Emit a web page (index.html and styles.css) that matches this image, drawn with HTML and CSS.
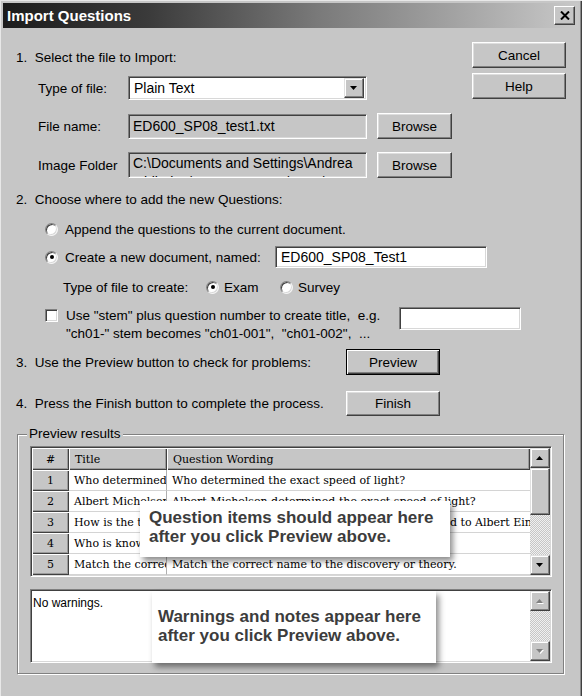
FILE: index.html
```html
<!DOCTYPE html>
<html>
<head>
<meta charset="utf-8">
<link rel="stylesheet" href="styles.css">
</head>
<body>
<div class="window">
  <div class="titlebar">
    <span class="title">Import Questions</span>
    <span class="close"><svg width="10" height="9" viewBox="0 0 10 9"><path d="M1 0.5L9 8.5M9 0.5L1 8.5" stroke="#000" stroke-width="2"/></svg></span>
  </div>
  <div class="body">
    <div class="top">
      <div class="step1">
        <div class="h h1">1.&nbsp; Select the file to Import:</div>
        <div class="row r-type">
          <span class="lbl">Type of file:</span>
          <div class="combo"><span class="combo-text">Plain Text</span><span class="dd"><svg width="8" height="4" viewBox="0 0 8 4"><path d="M0 0H7L3.5 4Z" fill="#000"/></svg></span></div>
        </div>
        <div class="row r-file">
          <span class="lbl">File name:</span>
          <div class="field ro">ED600_SP08_test1.txt</div>
          <button class="btn browse">Browse</button>
        </div>
        <div class="row r-img">
          <span class="lbl">Image Folder</span>
          <div class="field ro multi">C:\Documents and Settings\Andrea<br>Ohlhaber\My Documents\2008\Research</div>
          <button class="btn browse">Browse</button>
        </div>
      </div>
      <div class="side">
        <button class="btn side-btn">Cancel</button>
        <button class="btn side-btn">Help</button>
      </div>
    </div>

    <div class="h h2">2.&nbsp; Choose where to add the new Questions:</div>
    <div class="row opt-append">
      <span class="radio"></span><span class="rtext">Append the questions to the current document.</span>
    </div>
    <div class="row opt-create">
      <span class="rlabel"><span class="radio on"></span><span class="rtext">Create a new document, named:</span></span>
      <div class="field white name-field">ED600_SP08_Test1</div>
    </div>
    <div class="row type-row">
      <span class="tlabel">Type of file to create:</span>
      <span class="opt"><span class="radio on"></span><span class="otext">Exam</span></span>
      <span class="opt"><span class="radio"></span><span class="otext">Survey</span></span>
    </div>
    <div class="stem-row">
      <span class="check"></span>
      <span class="stem-text">Use "stem" plus question number to create title,&nbsp; e.g.<br>"ch01-" stem becomes "ch01-001",&nbsp; "ch01-002",&nbsp; ...</span>
      <div class="field white stem-field"></div>
    </div>
    <div class="row step3">
      <span class="slabel">3.&nbsp; Use the Preview button to check for problems:</span>
      <button class="btn default act">Preview</button>
    </div>
    <div class="row step4">
      <span class="slabel">4.&nbsp; Press the Finish button to complete the process.</span>
      <button class="btn act finish">Finish</button>
    </div>

    <div class="group">
      <span class="group-label">Preview results</span>
      <div class="grid-wrap">
        <div class="grid">
          <div class="hc num">#</div><div class="hc">Title</div><div class="hc">Question Wording</div>
          <div class="rc">1</div><div class="dc t">Who determined the exact speed of light</div><div class="dc">Who determined the exact speed of light?</div>
          <div class="rc">2</div><div class="dc t">Albert Michelson</div><div class="dc">Albert Michelson determined the exact speed of light?</div>
          <div class="rc">3</div><div class="dc t">How is the theory of relativity</div><div class="dc">How is the theory of relativity also often attributed to Albert Einstein?</div>
          <div class="rc">4</div><div class="dc t">Who is known as the father</div><div class="dc">Who is known as the father of physics?</div>
          <div class="rc">5</div><div class="dc t">Match the correct name</div><div class="dc">Match the correct name to the discovery or theory.</div>
        </div>
        <div class="vscroll">
          <span class="sbtn"><svg width="8" height="4" viewBox="0 0 8 4"><path d="M0 4H7L3.5 0Z" fill="#000"/></svg></span>
          <span class="thumb"></span>
          <span class="track"></span>
          <span class="sbtn"><svg width="8" height="4" viewBox="0 0 8 4"><path d="M0 0H7L3.5 4Z" fill="#000"/></svg></span>
        </div>
      </div>
      <div class="warn-wrap">
        <div class="warn-text">No warnings.</div>
        <div class="vscroll">
          <span class="sbtn dis"><svg width="9" height="5" viewBox="0 0 9 5"><path d="M1 5H8L4.5 1.5Z" fill="#fff"/><path d="M0 4H7L3.5 0Z" fill="#808080"/></svg></span>
          <span class="track"></span>
          <span class="sbtn dis"><svg width="9" height="5" viewBox="0 0 9 5"><path d="M1 1H8L4.5 5Z" fill="#fff"/><path d="M0 0H7L3.5 4Z" fill="#808080"/></svg></span>
        </div>
      </div>
      <div class="callout callout1">Question items should appear here<br>after you click Preview above.</div>
      <div class="callout callout2">Warnings and notes appear here<br>after you click Preview above.</div>
    </div>
  </div>
</div>
</body>
</html>
```
FILE: styles.css
```css
html, body {
  margin: 0;
  padding: 0;
}
body {
  width: 582px;
  height: 696px;
  overflow: hidden;
  background: #c6c6c6;
  font-family: "Liberation Sans", Arial, sans-serif;
  font-size: 13.5px;
  color: #000;
}
.window {
  width: 582px;
  height: 696px;
  box-sizing: border-box;
  padding: 3px 4px 0 3px;
  background: #c6c6c6;
  box-shadow: inset 1px 1px 0 #e8e8e8, inset -1px 0 0 #404040, inset -2px 0 0 #8a8a8a;
}
.titlebar {
  height: 25px;
  display: flex;
  align-items: center;
  justify-content: space-between;
  padding: 0 3px 0 4px;
  background: linear-gradient(to right, #1c1c1c 0%, #3a3a3a 25%, #7a7a7a 55%, #c8c8c8 100%);
}
.title {
  color: #fff;
  font-weight: bold;
  font-size: 15px;
}
.close {
  width: 21px;
  height: 19px;
  box-sizing: border-box;
  background: #c6c6c6;
  border: 1px solid;
  border-color: #fff #404040 #404040 #fff;
  box-shadow: inset -1px -1px 0 #808080;
  display: flex;
  align-items: center;
  justify-content: center;
}
.body {
  padding: 0 12px 0 13px;
}
.top {
  display: flex;
  justify-content: space-between;
}
.h {
  height: 16px;
  line-height: 16px;
  white-space: nowrap;
}
.h1 { margin-top: 22px; }
.h2 { margin-top: 14px; }
.row {
  display: flex;
  align-items: center;
  white-space: nowrap;
}
.side {
  display: flex;
  flex-direction: column;
  gap: 5px;
  margin-top: 14px;
}
.btn {
  font-family: "Liberation Sans", Arial, sans-serif;
  font-size: 13.5px;
  color: #000;
  background: #c6c6c6;
  border: 1px solid;
  border-color: #fff #404040 #404040 #fff;
  box-shadow: inset -1px -1px 0 #808080, inset 1px 1px 0 #dedede;
  box-sizing: border-box;
  padding: 0;
  margin: 0;
}
.side-btn {
  width: 94px;
  height: 26px;
}
.r-type, .r-file, .r-img {
  padding-left: 22px;
}
.r-type { margin-top: 10px; height: 24px; }
.r-file { margin-top: 13px; height: 26px; }
.r-img { margin-top: 13px; height: 26px; }
.lbl { width: 90px; }
.field, .combo, .check, .grid-wrap, .warn-wrap {
  border: 1px solid;
  border-color: #808080 #fff #fff #808080;
  box-shadow: inset 1px 1px 0 #404040, inset -1px -1px 0 #d8d8d8;
  box-sizing: border-box;
}
.combo {
  width: 239px;
  height: 24px;
  background: #fff;
  display: flex;
  align-items: center;
  justify-content: space-between;
  padding: 2px 2px 2px 5px;
  font-size: 14px;
}
.dd {
  width: 20px;
  height: 20px;
  box-sizing: border-box;
  background: #c6c6c6;
  border: 1px solid;
  border-color: #e0e0e0 #404040 #404040 #e0e0e0;
  box-shadow: inset -1px -1px 0 #808080, inset 1px 1px 0 #fff;
  display: flex;
  align-items: center;
  justify-content: center;
}
.field {
  width: 239px;
  height: 25px;
  padding: 2px 4px;
  line-height: 19px;
  font-size: 14px;
  overflow: hidden;
  white-space: nowrap;
}
.ro { background: #c6c6c6; }
.white { background: #fff; }
.multi {
  height: 26px;
  line-height: 19px;
  padding-top: 1px;
}
.browse {
  width: 75px;
  height: 26px;
  margin-left: 10px;
}
.radio {
  width: 13px;
  height: 13px;
  border-radius: 50%;
  box-sizing: border-box;
  background: #fff;
  border: 1px solid;
  border-color: #808080 #f4f4f4 #f4f4f4 #808080;
  box-shadow: inset 1px 1px 0 #404040, inset -1px -1px 0 #d8d8d8;
  position: relative;
  flex: none;
}
.radio.on::after {
  content: "";
  position: absolute;
  left: 3.5px;
  top: 3.5px;
  width: 4px;
  height: 4px;
  border-radius: 50%;
  background: #000;
}
.rtext { margin-left: 7px; }
.otext { margin-left: 5px; }
.opt-append {
  margin-top: 13px;
  height: 16px;
  padding-left: 29px;
}
.opt-create {
  margin-top: 9px;
  height: 22px;
  padding-left: 29px;
}
.rlabel {
  width: 230px;
  display: flex;
  align-items: center;
}
.name-field {
  width: 212px;
  height: 22px;
  line-height: 17px;
  padding: 2px 5px;
}
.type-row {
  margin-top: 11px;
  height: 16px;
  padding-left: 47px;
}
.tlabel { width: 143px; }
.opt {
  width: 74px;
  display: flex;
  align-items: center;
}
.stem-row {
  margin-top: 12px;
  display: flex;
  align-items: flex-start;
  padding-left: 29px;
  white-space: nowrap;
}
.check {
  width: 13px;
  height: 13px;
  background: #fff;
  margin-top: 2px;
  flex: none;
}
.stem-text {
  width: 333px;
  margin-left: 8px;
  line-height: 18px;
}
.stem-field {
  width: 122px;
  height: 23px;
}
.step3 {
  margin-top: 6px;
  height: 26px;
}
.step4 {
  margin-top: 16px;
  height: 25px;
}
.slabel { width: 330px; }
.act {
  width: 94px;
  height: 26px;
}
.finish { height: 25px; }
.default {
  border: 1px solid #000;
  box-shadow: inset 1px 1px 0 #fff, inset -1px -1px 0 #404040, inset -2px -2px 0 #808080;
}
.group {
  position: relative;
  margin-top: 18px;
  margin-left: 1px;
  width: 547px;
  height: 240px;
  box-sizing: border-box;
  border: 1px solid #808080;
  box-shadow: inset 1px 1px 0 #fff, 1px 1px 0 #fff;
  padding: 11px 11px 0 12px;
}
.group-label {
  position: absolute;
  left: 9px;
  top: -9px;
  padding: 0 2px;
  background: #c6c6c6;
  line-height: 16px;
  font-size: 13.5px;
}
.grid-wrap {
  width: 522px;
  height: 131px;
  display: flex;
  background: #fff;
  padding: 1px;
}
.grid {
  flex: 1;
  display: grid;
  grid-template-columns: 37px 98px 1fr;
  grid-template-rows: 22px repeat(5, 21px);
  font-family: "DejaVu Serif", "Liberation Serif", serif;
  font-size: 11px;
  overflow: hidden;
}
.hc, .rc {
  background: #c6c6c6;
  box-shadow: inset 1px 1px 0 #fff, inset -1px -1px 0 #404040, inset -2px -2px 0 #9a9a9a;
  display: flex;
  align-items: center;
  padding-left: 6px;
  white-space: nowrap;
}
.hc.num, .rc {
  justify-content: center;
  padding-left: 0;
}
.dc {
  display: flex;
  align-items: center;
  padding-left: 5px;
  white-space: nowrap;
  overflow: hidden;
  border-bottom: 1px solid #d4d4d4;
  box-sizing: border-box;
}
.dc.t {
  border-right: 1px solid #b0b0b0;
}
.vscroll {
  width: 20px;
  flex: none;
  display: flex;
  flex-direction: column;
}
.sbtn {
  height: 20px;
  flex: none;
  box-sizing: border-box;
  background: #c6c6c6;
  border: 1px solid;
  border-color: #e0e0e0 #404040 #404040 #e0e0e0;
  box-shadow: inset -1px -1px 0 #808080, inset 1px 1px 0 #fff;
  display: flex;
  align-items: center;
  justify-content: center;
}
.thumb {
  height: 47px;
  flex: none;
  box-sizing: border-box;
  background: #c6c6c6;
  border: 1px solid;
  border-color: #e0e0e0 #404040 #404040 #e0e0e0;
  box-shadow: inset -1px -1px 0 #808080, inset 1px 1px 0 #fff;
}
.track {
  flex: 1;
  background-color: #c6c6c6;
  background-image: repeating-conic-gradient(#f0f0f0 0 25%, #c6c6c6 0 50%);
  background-size: 2px 2px;
}
.warn-wrap {
  margin-top: 12px;
  width: 522px;
  height: 74px;
  display: flex;
  background: #fff;
  padding: 1px;
}
.warn-text {
  flex: 1;
  font-size: 12px;
  padding: 5px 1px;
  line-height: 14px;
}
.callout {
  position: absolute;
  background: #fff;
  color: #3c3c3c;
  font-weight: bold;
  font-size: 17px;
  line-height: 19px;
  white-space: nowrap;
  box-sizing: border-box;
  box-shadow: 3px 4px 6px rgba(0, 0, 0, 0.45);
}
.callout1 {
  left: 122px;
  top: 66px;
  width: 310px;
  height: 56px;
  padding: 7px 0 0 9px;
}
.callout2 {
  left: 134px;
  top: 156px;
  width: 284px;
  height: 72px;
  padding: 16px 0 0 6px;
}
```
